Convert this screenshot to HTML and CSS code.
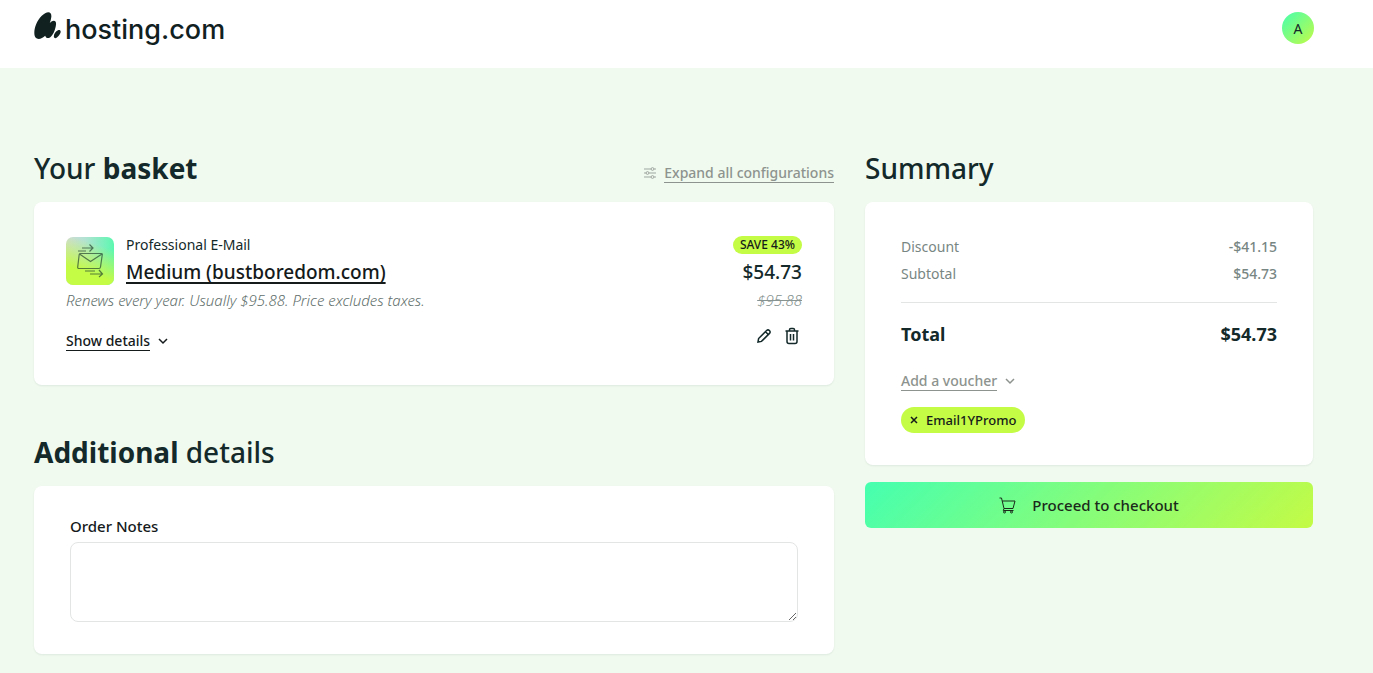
FILE: index.html
```
<!DOCTYPE html>
<html lang="en">
<head>
  <meta charset="UTF-8">
  <meta name="viewport" content="width=device-width, initial-scale=1.0">
  <title>Basket - hosting.com</title>
  <link rel="stylesheet" href="styles.css">
</head>
<body>
  <header class="topbar">
    <a class="logo" href="#">
      <svg width="27" height="28" viewBox="0 0 27 28" aria-hidden="true">
        <path d="M1.500 25.500C-1.500 21 1.500 10 7.500 4C12.500-1 18 -1.500 17.300 5C17 7.500 16.300 9.500 15.800 11C19 7.800 22.500 8 22 12.500C21.500 17.500 19 23.500 16 25.500C13.500 26.700 12 26 11.200 23.800C8 27 3.500 28 1.500 25.500Z"/>
        <path d="M20.400 25.800C18.700 24 21 19.300 24 18.200C27 17.500 27.500 20 25.300 23C23.500 25.500 21.500 26.800 20.400 25.800Z"/>
      </svg>
      <span>hosting.com</span>
    </a>
    <button class="avatar">A</button>
  </header>
  <main class="page">
    <div class="basket">
      <div class="heading">
        <h1>Your <b>basket</b></h1>
        <button class="text-button muted expand">
          <svg width="12" height="12" viewBox="0 0 12 12" aria-hidden="true">
            <path d="M0 2H7M10 2H12M0 6H2M5 6H12M0 10H7M10 10H12"/>
            <circle cx="8.5" cy="2" r="1.4"/><circle cx="3.5" cy="6" r="1.4"/><circle cx="8.5" cy="10" r="1.4"/>
          </svg>
          <span>Expand all configurations</span>
        </button>
      </div>
      <section class="card item">
        <div class="item-info">
          <div class="product">
            <svg class="product-icon" width="48" height="48" viewBox="0 0 48 48" aria-hidden="true">
              <defs>
                <linearGradient id="mint" x1="0" y1="0" x2="1" y2="0">
                  <stop offset="0" stop-color="#d2dadb"/>
                  <stop offset=".4" stop-color="#b2e2d2"/>
                  <stop offset="1" stop-color="#5cf8b0"/>
                </linearGradient>
                <linearGradient id="lime" x1=".7" y1="0" x2=".35" y2="1">
                  <stop offset=".15" stop-color="#c4fb45" stop-opacity="0"/>
                  <stop offset=".75" stop-color="#c4fb45"/>
                </linearGradient>
              </defs>
              <rect width="48" height="48" rx="7" fill="url(#mint)"/>
              <rect width="48" height="48" rx="7" fill="url(#lime)"/>
              <g class="strokes">
                <path d="M14.500 16.500H35.500Q36.500 16.500 36.300 17.500L34.500 30Q34.300 31.500 33 31.500H13Q11.500 31.500 11.700 30L13.200 17.500Q13.400 16.500 14.500 16.500ZM13.500 17L24.500 24.500L36 17"/>
                <path d="M16 11H27M23.500 7.500L27 11L23.500 14.500M12 14H20"/>
                <path d="M19 34H29M24 37H36.500M33 33L36.500 37L33 40"/>
              </g>
            </svg>
            <div>
              <p class="product-type">Professional E-Mail</p>
              <a class="product-name" href="#">Medium (bustboredom.com)</a>
            </div>
          </div>
          <p class="renewal">Renews every year. Usually $95.88. Price excludes taxes.</p>
          <button class="text-button details">
            <span>Show details</span>
            <svg width="10" height="7" viewBox="0 0 10 7" aria-hidden="true"><path d="M1 1L5 5L9 1"/></svg>
          </button>
        </div>
        <div class="item-price">
          <div class="badge-row"><span class="badge">SAVE 43%</span></div>
          <p class="price">$54.73</p>
          <del class="old-price">$95.88</del>
          <div class="actions">
            <button aria-label="Edit">
              <svg width="16" height="16" viewBox="0 0 16 16"><path d="M2 14L2.600 10.500L10.600 2.500Q12 1.200 13.400 2.500Q14.800 4 13.500 5.400L5.500 13.400ZM9.500 3.700L12.300 6.500"/></svg>
            </button>
            <button aria-label="Remove">
              <svg width="16" height="18" viewBox="0 0 16 18"><path d="M1.500 4H14.500M5.500 4V2.800Q5.500 1.500 6.800 1.500H9.200Q10.500 1.500 10.500 2.800V4M3 4V14.500Q3 16.500 5 16.500H11Q13 16.500 13 14.500V4M6.500 7V13.500M9.500 7V13.500"/></svg>
            </button>
          </div>
        </div>
      </section>
      <div class="heading additional">
        <h2><b>Additional</b> details</h2>
      </div>
      <section class="card notes">
        <label for="order-notes">Order Notes</label>
        <textarea id="order-notes"></textarea>
      </section>
    </div>
    <aside class="summary">
      <div class="heading">
        <h2>Summary</h2>
      </div>
      <section class="card totals">
        <dl>
          <div class="line"><dt>Discount</dt><dd>-$41.15</dd></div>
          <div class="line"><dt>Subtotal</dt><dd>$54.73</dd></div>
          <div class="line total"><dt>Total</dt><dd>$54.73</dd></div>
        </dl>
        <button class="text-button muted voucher">
          <span>Add a voucher</span>
          <svg width="10" height="7" viewBox="0 0 10 7" aria-hidden="true"><path d="M1 1L5 5L9 1"/></svg>
        </button>
        <button class="promo" aria-label="Remove Email1YPromo">
          <svg width="8" height="8" viewBox="0 0 8 8" aria-hidden="true"><path d="M1 1L7 7M7 1L1 7"/></svg>
          <span>Email1YPromo</span>
        </button>
      </section>
      <button class="checkout">
        <svg width="17" height="17" viewBox="0 0 17 17" aria-hidden="true">
          <path d="M0.500 1H2.500L5 11.500H14L16 4H3.300M5 11.500L4.300 13.500H14.500"/>
          <circle cx="5.500" cy="15" r="1"/><circle cx="12.500" cy="15" r="1"/>
        </svg>
        <span>Proceed to checkout</span>
      </button>
    </aside>
  </main>
</body>
</html>
```
FILE: styles.css
```
* { box-sizing: border-box; }
body { margin: 0; min-height: 100vh; background-color: #f0faef; color: #13292a; font-family: "Noto Sans", "Open Sans", sans-serif; font-size: 14px; }
h1, h2, p, dl, dd { margin: 0; }
button { padding: 0; border: none; background: none; color: inherit; font: inherit; cursor: pointer; }
svg { flex: none; fill: none; stroke: currentColor; stroke-width: 1.5; }

.topbar { display: flex; justify-content: space-between; height: 68px; padding: 12px 59px 0 34px; background-color: white; }
.logo { display: flex; height: 32px; gap: 4px; color: #10211f; font-family: Inter, sans-serif; font-size: 27px; font-weight: 500; line-height: 35px; text-decoration: none; }
.logo svg { fill: currentColor; stroke: none; }
.avatar { width: 32px; height: 32px; border-radius: 50%; background: linear-gradient(135deg, #45ffb0, #c4fb45); }

.page { display: grid; grid-template-columns: 25fr 14fr; gap: 31px; padding: 82px 60px 18px 34px; }
.heading { display: flex; justify-content: space-between; align-items: center; height: 36px; margin-bottom: 16px; }
.heading h1, .heading h2 { font-size: 28px; font-weight: 500; line-height: 36px; }
.heading b { font-weight: 700; }
.heading.additional { margin-top: 49px; }
.card { border-radius: 8px; background-color: white; box-shadow: 0 1px 2px rgba(19, 41, 42, 0.08); }

.text-button { display: flex; align-items: center; gap: 8px; color: #151a1b; font-weight: 500; line-height: 18px; }
.text-button span { border-bottom: 1px solid; }
.text-button.muted { color: #8d938e; }
.expand { margin-top: 10px; }
.expand svg { stroke-width: 1; opacity: 0.8; }

.item { display: flex; justify-content: space-between; padding: 32px; }
.product { display: flex; align-items: center; gap: 12px; }
.product-icon .strokes { stroke: #1c3a2a; stroke-width: 1.2; opacity: 0.65; }
.product-icon rect { stroke: none; }
.product-type { line-height: 22px; }
.product-name { display: block; color: #151a1b; font-size: 19px; font-weight: 500; line-height: 32px; text-underline-offset: 3px; text-decoration-thickness: 2px; }
.renewal { color: #5f6f6c; font-size: 15px; font-style: italic; font-weight: 300; line-height: 24px; }
.details { height: 24px; margin-top: 17px; }
.item-price { display: flex; flex-direction: column; align-items: flex-end; }
.badge-row { display: flex; align-items: center; height: 22px; }
.badge { padding: 0 7px; border-radius: 9px; background-color: #c4fb45; color: #151a1b; font-size: 12px; font-weight: 500; line-height: 18px; }
.price { font-size: 19px; font-weight: 500; line-height: 32px; }
.old-price { color: #869390; font-size: 15px; font-style: italic; font-weight: 300; line-height: 24px; }
.actions { display: flex; align-items: center; gap: 12px; height: 24px; margin-top: 12px; padding-right: 2px; }
.actions svg { display: block; }

.notes { padding: 30px 36px 32px; }
.notes label { display: block; margin-bottom: 6px; color: #151a1b; font-size: 15px; font-weight: 500; line-height: 20px; }
.notes textarea { display: block; width: 100%; height: 80px; padding: 8px 12px; border: 1px solid #e3e5e4; border-radius: 8px; background-color: white; font: inherit; outline: none; resize: vertical; }
.notes textarea:focus { border-color: #45ffb0; }

.totals { padding: 31px 36px 32px; }
.line { display: flex; justify-content: space-between; color: #788683; line-height: 27px; }
.line dd { font-weight: 500; }
.line.total { margin-top: 15px; padding-top: 15px; border-top: 1px solid #e3e5e4; color: #13292a; font-size: 18px; font-weight: 700; line-height: 32px; }
.line.total dd { font-weight: 700; }
.voucher { height: 28px; margin: 17px 0 12px; }
.promo { display: flex; align-items: center; gap: 8px; height: 26px; padding: 0 9px; border-radius: 13px; background-color: #c4fb45; color: #151a1b; font-size: 13px; font-weight: 500; }
.checkout { display: flex; justify-content: center; align-items: center; gap: 16px; width: 100%; height: 46px; margin-top: 17px; border-radius: 6px; background: linear-gradient(135deg, #45ffb0, #c4fb45); color: #1b2a1b; font-size: 15px; font-weight: 500; }
.checkout svg { stroke-width: 1; }
```
